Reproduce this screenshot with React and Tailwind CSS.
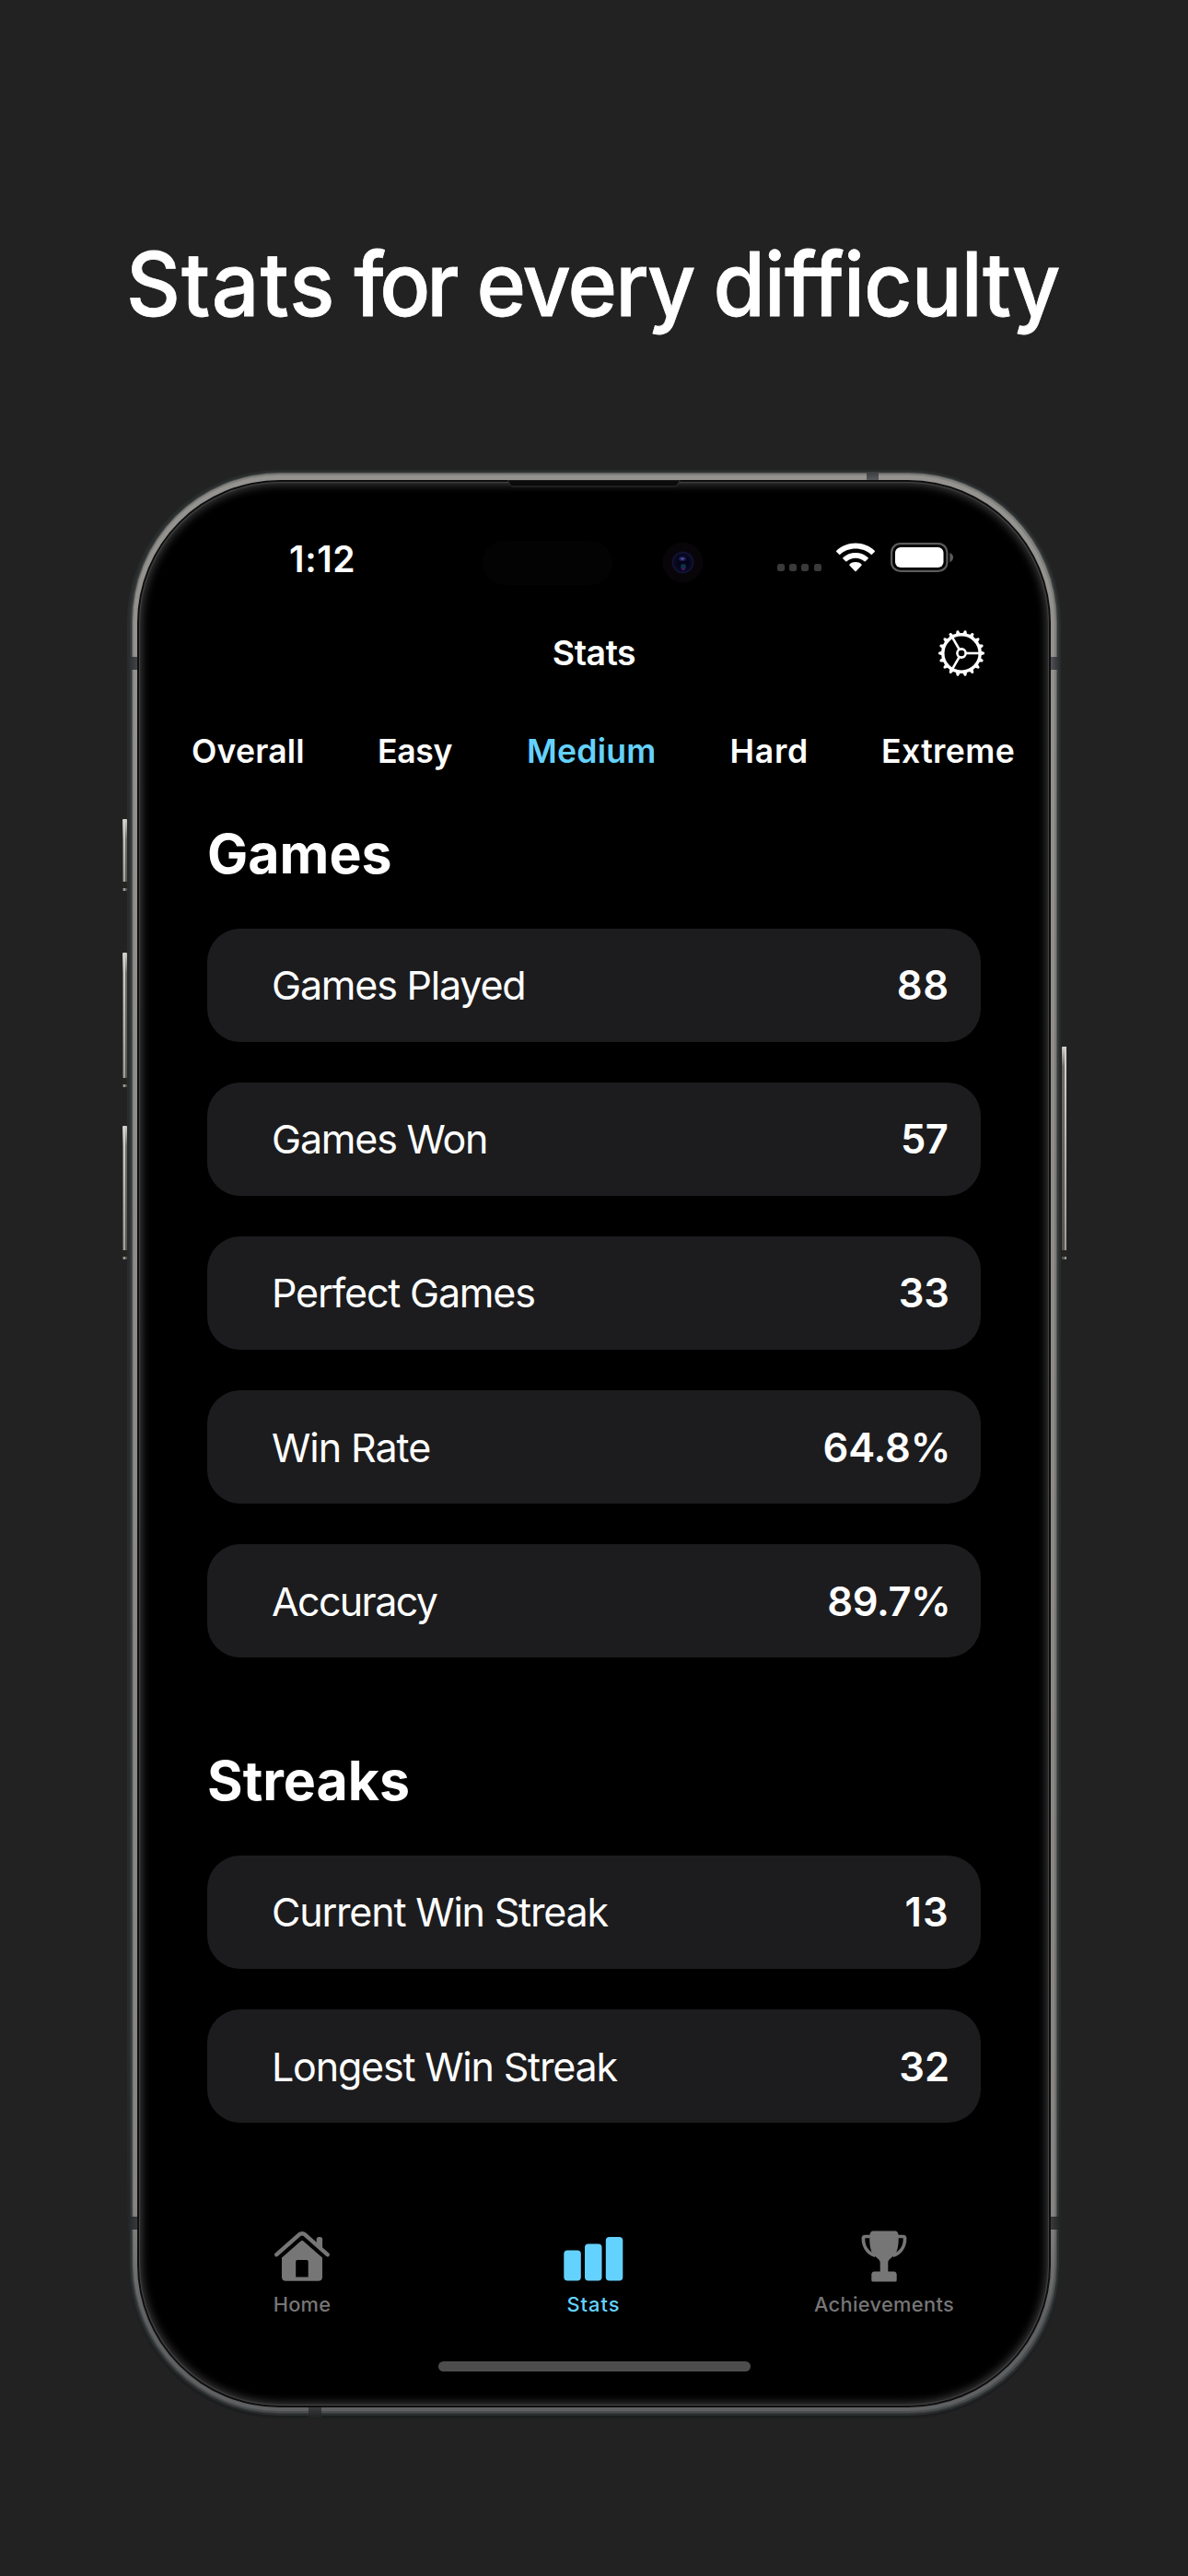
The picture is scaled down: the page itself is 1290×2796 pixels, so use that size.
import React from "react";

const TABS = [
  { label: "Overall", cls: "w-[202px] tracking-[0.2px] text-white" },
  { label: "Easy", cls: "w-[162px] tracking-[-0.3px] text-white" },
  { label: "Medium", cls: "w-[220.5px] tracking-[0.24px] text-[#64d2ff]" },
  { label: "Hard", cls: "w-[164.5px] tracking-[0.77px] text-white" },
  { label: "Extreme", cls: "tracking-[0.4px] text-white" },
];

const GAMES = [
  { label: "Games Played", value: "88", v: "tracking-[0.8px]" },
  { label: "Games Won", value: "57", v: "tracking-[-0.4px] mr-[1.5px]" },
  { label: "Perfect Games", value: "33" },
  { label: "Win Rate", value: "64.8%", l: "tracking-[-1.05px]", v: "tracking-[-0.2px] mr-[-1.2px]" },
  { label: "Accuracy", value: "89.7%", l: "tracking-[-1.65px]", v: "tracking-[-0.4px] mr-[-1.4px]" },
];

const STREAKS = [
  { label: "Current Win Streak", value: "13", v: "tracking-[1.2px]" },
  { label: "Longest Win Streak", value: "32" },
];

function StatCard({ label, value, l = "tracking-[-1.2px]", v = "tracking-normal" }) {
  return (
    <div className="flex h-[123px] items-center justify-between rounded-[36px] bg-[#1c1c1e] pl-[70px] pr-[34px] text-[43px] leading-[52px] text-white">
      <span className={"font-normal " + l}>{label}</span>
      <span className={"text-[43.5px] font-semibold " + v}>{value}</span>
    </div>
  );
}

function Section({ title, items, className = "" }) {
  return (
    <section className={"ml-[87px] w-[840px] " + className}>
      <h2 className="flex h-[155px] items-center pt-[1px] text-[59px] font-bold leading-[72px] text-white">{title}</h2>
      <div className="mt-[3.6px] flex flex-col gap-[44.2px]">
        {items.map((item) => (
          <StatCard key={item.label} {...item} />
        ))}
      </div>
    </section>
  );
}

function Gear() {
  return (
    <svg className="h-[52px] w-[52px]" viewBox="-26 -26 52 52" fill="none" stroke="#fff">
      <circle r="20.2" strokeWidth="3.4" />
      {Array.from({ length: 18 }, (_, i) => (
        <path key={i} d="M20.5 -2.600L24.600 -1.200Q25.600 0 24.600 1.200L20.500 2.600Z" fill="#fff" stroke="none" transform={`rotate(${i * 20})`} />
      ))}
      {[0, 120, 240].map((a) => (
        <path key={a} d="M5 0H20" strokeWidth="2.6" transform={`rotate(${a})`} />
      ))}
      <circle r="4.6" strokeWidth="2.6" />
    </svg>
  );
}

function Wifi() {
  return (
    <svg className="h-[32px] w-[42px]" viewBox="0 0 42 32" fill="#fff">
      <path d="M21 .6C29 .6 36.300 3.600 41.700 8.800Q42.200 9.400 41.700 10L38.900 12.800Q38.300 13.300 37.700 12.800C33.200 8.700 27.300 6.500 21 6.500S8.800 8.700 4.300 12.800Q3.700 13.300 3.100 12.800L.3 10Q-.2 9.400 .3 8.800C5.700 3.600 13 .6 21 .6Z" />
      <path d="M21 11.100C26.200 11.100 31 13 34.600 16.300Q35.200 16.900 34.600 17.500L31.700 20.300Q31.200 20.900 30.500 20.300C27.900 18 24.600 16.800 21 16.800S14.100 18 11.500 20.300Q10.800 20.900 10.300 20.300L7.400 17.500Q6.800 16.900 7.400 16.300C11 13 15.800 11.100 21 11.100Z" />
      <path d="M21 21.100C23.500 21.100 25.700 21.900 27.500 23.500Q28.100 24.100 27.500 24.700L21.600 30.900Q21 31.500 20.400 30.900L14.500 24.700Q13.900 24.100 14.500 23.500C16.300 21.900 18.500 21.100 21 21.100Z" />
    </svg>
  );
}

function Battery() {
  return (
    <svg className="h-[32px] w-[69px]" viewBox="0 0 69 32" fill="none">
      <rect x="1.1" y="1.1" width="60.300" height="29.800" rx="9.500" stroke="#5b5b5b" strokeWidth="2.200" />
      <rect x="5" y="5" width="52.500" height="22" rx="6" fill="#fff" />
      <path d="M64.300 11C69.300 12.800 69.300 19.300 64.300 21.300Z" fill="#5b5b5b" />
    </svg>
  );
}

function HouseIcon() {
  return (
    <svg className="h-[56px] w-[60px]" viewBox="0 0 60 56" fill="#767676">
      <path d="M2.300 26.200L27 4.300Q30 2 33 4.300L57.600 26.200" fill="none" stroke="#767676" strokeWidth="4.400" strokeLinecap="round" strokeLinejoin="round" />
      <path d="M45.700 15.500V9.600Q45.700 7 48.300 7H49.500Q52.100 7 52.100 9.600V21.500Z" />
      <path fillRule="evenodd" d="M28.900 11.300Q30 10.300 31.100 11.300L52 29.500V50.500Q52 54.700 47.500 54.700H12.500Q8 54.700 8 50.500V29.500ZM24.700 32Q23.200 32 23.200 33.500V50.500H36.700V33.500Q36.700 32 35.200 32Z" />
    </svg>
  );
}

function BarsIcon() {
  return (
    <svg className="h-[56px] w-[65px]" viewBox="0 0 65 56" fill="#64d2ff">
      <rect x=".3" y="21.500" width="18.500" height="33" rx="4" />
      <rect x="23" y="14.500" width="18.500" height="40" rx="4" />
      <rect x="45.800" y="7" width="18.500" height="47.500" rx="4" />
    </svg>
  );
}

function TrophyIcon() {
  return (
    <svg className="h-[56px] w-[50px]" viewBox="0 0 50 56" fill="#767676">
      <path d="M13 .5H37Q40 .5 40.600 5C41 12 40.500 20 37.500 25C35 28.500 30 31 29.300 34V44.500H35.500Q38.700 44.500 38.700 48V54Q38.700 55.500 37.200 55.500H12.800Q11.300 55.500 11.300 54V48Q11.300 44.500 14.500 44.500H20.700V34C20 31 15 28.500 12.500 25C9.500 20 9 12 9.400 5Q10 .5 13 .5Z" />
      <path d="M10.500 6.500H4.500Q2.400 6.500 2.400 8.600C2.400 17 6.500 24.500 15.500 27.300M39.500 6.500H45.500Q47.600 6.500 47.600 8.600C47.600 17 43.500 24.500 34.500 27.300" fill="none" stroke="#767676" strokeWidth="3.700" />
    </svg>
  );
}

function NavItem({ icon, label, className }) {
  return (
    <div className={"flex w-[316px] flex-col items-center text-[21.8px] font-medium leading-[28px] " + className}>
      {icon}
      <span className="mt-[10px]">{label}</span>
    </div>
  );
}

function SideButton({ className, flip }) {
  return (
    <div className={"absolute w-[5px] rounded-[1px] bg-linear-to-b from-[#d3d1cc] from-[0px] via-[#6d6b66] via-[22px] to-[#56544f] " + className}>
      <div className={"h-full w-[2px] bg-linear-to-b from-[#d3d1cc] to-[#9a9893] " + (flip ? "ml-[3px]" : "ml-[1.5px]")} />
      <div className="absolute bottom-[3px] left-0 h-[7px] w-full bg-[#25241f]" />
    </div>
  );
}

function Frame() {
  return (
    <>
      <SideButton className="left-[-5.500px] top-[379px] h-[78px]" />
      <SideButton className="left-[-5.500px] top-[524px] h-[146px]" />
      <SideButton className="left-[-5.500px] top-[712px] h-[145px]" />
      <SideButton flip className="right-[-5.500px] top-[626px] h-[231px]" />
      <div className="absolute inset-0 rounded-[166px] bg-linear-to-b from-[#292c2d] from-80% to-[#1b1d1e] to-100%" />
      <div className="absolute inset-x-[2.500px] bottom-[3px] top-[1.500px] rounded-[164px] bg-linear-to-b from-[#36393a] from-80% to-[#2a2d2e] to-100%" />
      <div className="absolute inset-x-[4.500px] bottom-[5px] top-[2.500px] rounded-[162px] bg-linear-to-b from-[#5c5d5b] from-[0px] via-[#4c4e4e] via-[1880px] to-[#383b3c] to-[2000px]" />
      <div className="absolute inset-x-[5.500px] bottom-[6.500px] top-[4px] rounded-[160px] bg-linear-to-b from-[#80807c] from-[0px] via-[#727271] via-[1880px] to-[#4a4d4e] to-[2000px]" />
      <div className="absolute inset-x-[7px] bottom-[8.500px] top-[5.500px] rounded-[159px] bg-linear-to-b from-[#95938f] from-[0px] via-[#858482] via-[1880px] to-[#5e6061] to-[2000px]" />
      <div className="absolute left-0 top-[203px] h-[14px] w-[12px] bg-linear-to-r from-[#26292a] to-[#46484b]" />
      <div className="absolute right-0 top-[203px] h-[14px] w-[12px] bg-linear-to-l from-[#26292a] to-[#55575b]" />
      <div className="absolute left-0 top-[1896px] h-[14px] w-[12px] bg-linear-to-r from-[#202223] to-[#3a3c3e]" />
      <div className="absolute right-0 top-[1896px] h-[14px] w-[12px] bg-linear-to-l from-[#202223] to-[#3a3c3e]" />
      <div className="absolute left-[803px] top-[2px] h-[10px] w-[13px] bg-linear-to-b from-[#3a3c3e] to-[#5c5d61]" />
      <div className="absolute bottom-0 left-[197px] h-[12px] w-[14px] bg-linear-to-t from-[#1d1f20] to-[#3a3c3d]" />
      <div className="absolute inset-x-[10.700px] bottom-[12px] top-[10.500px] rounded-[155px] bg-[#0e0e0f]" />
      <div className="absolute inset-x-[13px] bottom-[14px] top-[12.500px] rounded-[153px] bg-black shadow-[inset_0_0_1px_1px_#444444,inset_0_0_10px_3px_#3c3c3c]" />
      <svg className="absolute left-[412px] top-[11px] h-[8px] w-[190px]" viewBox="0 0 190 8">
        <path d="M1 0L4.500 6Q5 7 6.500 7H182Q184 7 185 6L188.500 0Z" fill="#0b0b0b" stroke="#2e2e2e" />
      </svg>
      <div className="absolute left-[386px] top-[77px] h-[48px] w-[141px] rounded-full bg-[#030303]" />
      <svg className="absolute left-[581px] top-[78px] h-[45px] w-[45px]" viewBox="0 0 45 45">
        <circle cx="22.500" cy="22.500" r="22" fill="#070508" />
        <circle cx="22.500" cy="22.500" r="11" fill="#080920" stroke="#101230" strokeWidth="2" />
        <circle cx="22.500" cy="22.500" r="7" fill="#04041a" />
        <ellipse cx="22" cy="18.500" rx="4" ry="2.500" fill="#1e1e5a" />
        <ellipse cx="22" cy="18.500" rx="1.800" ry="1" fill="#5a5a98" />
        <circle cx="23" cy="27" r="3" fill="#0c3344" />
        <circle cx="23" cy="29.500" r="1.800" fill="#4a1560" />
      </svg>
    </>
  );
}

export default function App() {
  return (
    <div className="h-[2796px] w-[1290px] overflow-hidden bg-[#222222] font-['Inter',sans-serif]">
      <header className="h-[510px] pl-[137.200px] pt-[248px]">
        <h1 className="flex w-[1080px] origin-left scale-x-95 text-[96px] font-medium leading-[120px] text-white [-webkit-text-stroke:0.8px_white]">
          <span className="tracking-[1.260px]">{"Stats "}</span>
          <span className="ml-[20.800px] tracking-[-4.400px]">{"for "}</span>
          <span className="ml-[24.500px] tracking-[-1.900px]">{"every "}</span>
          <span className="ml-[21.700px] tracking-[-0.950px]">difficulty</span>
        </h1>
      </header>

      <main className="relative ml-[138px] h-[2115px] w-[1014px]">
        <Frame />
        <div className="relative flex h-full flex-col">
          <div className="mt-[65px] flex h-[60px] shrink-0 items-center justify-between pl-[176px] pr-[116px]">
            <span className="mt-[3px] text-[39px] font-semibold leading-[60px] tracking-[0.65px] text-white">1:12</span>
            <div className="flex items-center">
              <div className="mr-[16.500px] mt-[22px] flex gap-[5.100px]">
                {[0, 1, 2, 3].map((i) => (
                  <span key={i} className="h-[8px] w-[8px] rounded-[2.500px] bg-[#3a3a3a]" />
                ))}
              </div>
              <Wifi />
              <div className="w-[17px]" />
              <Battery />
            </div>
          </div>

          <div className="mt-[1px] grid h-[144px] shrink-0 grid-cols-3 items-center">
            <span />
            <h3 className="pt-[1px] text-center text-[37.400px] font-semibold leading-[46px] tracking-[-0.45px] text-white">Stats</h3>
            <div className="flex justify-end pr-[82.500px] pt-[1px]">
              <Gear />
            </div>
          </div>

          <nav className="flex h-[69px] shrink-0 items-center pl-[70px] pt-[2px] text-[35.600px] font-semibold leading-[44px]">
            {TABS.map((t) => (
              <span key={t.label} className={"shrink-0 " + t.cls}>{t.label}</span>
            ))}
          </nav>

          <Section title="Games" items={GAMES} />
          <Section title="Streaks" items={STREAKS} className="mt-[56px]" />

          <nav className="ml-[32px] mt-[117px] flex">
            <NavItem icon={<HouseIcon />} label="Home" className="tracking-[0.25px] text-[#767676]" />
            <NavItem icon={<BarsIcon />} label="Stats" className="pl-[1px] tracking-[1px] text-[#64d2ff]" />
            <NavItem icon={<TrophyIcon />} label="Achievements" className="tracking-[0.350px] text-[#767676]" />
          </nav>
          <div className="ml-[337.500px] mt-[48px] h-[11px] w-[339px] rounded-full bg-[#4d4d4d]" />
        </div>
      </main>
    </div>
  );
}
